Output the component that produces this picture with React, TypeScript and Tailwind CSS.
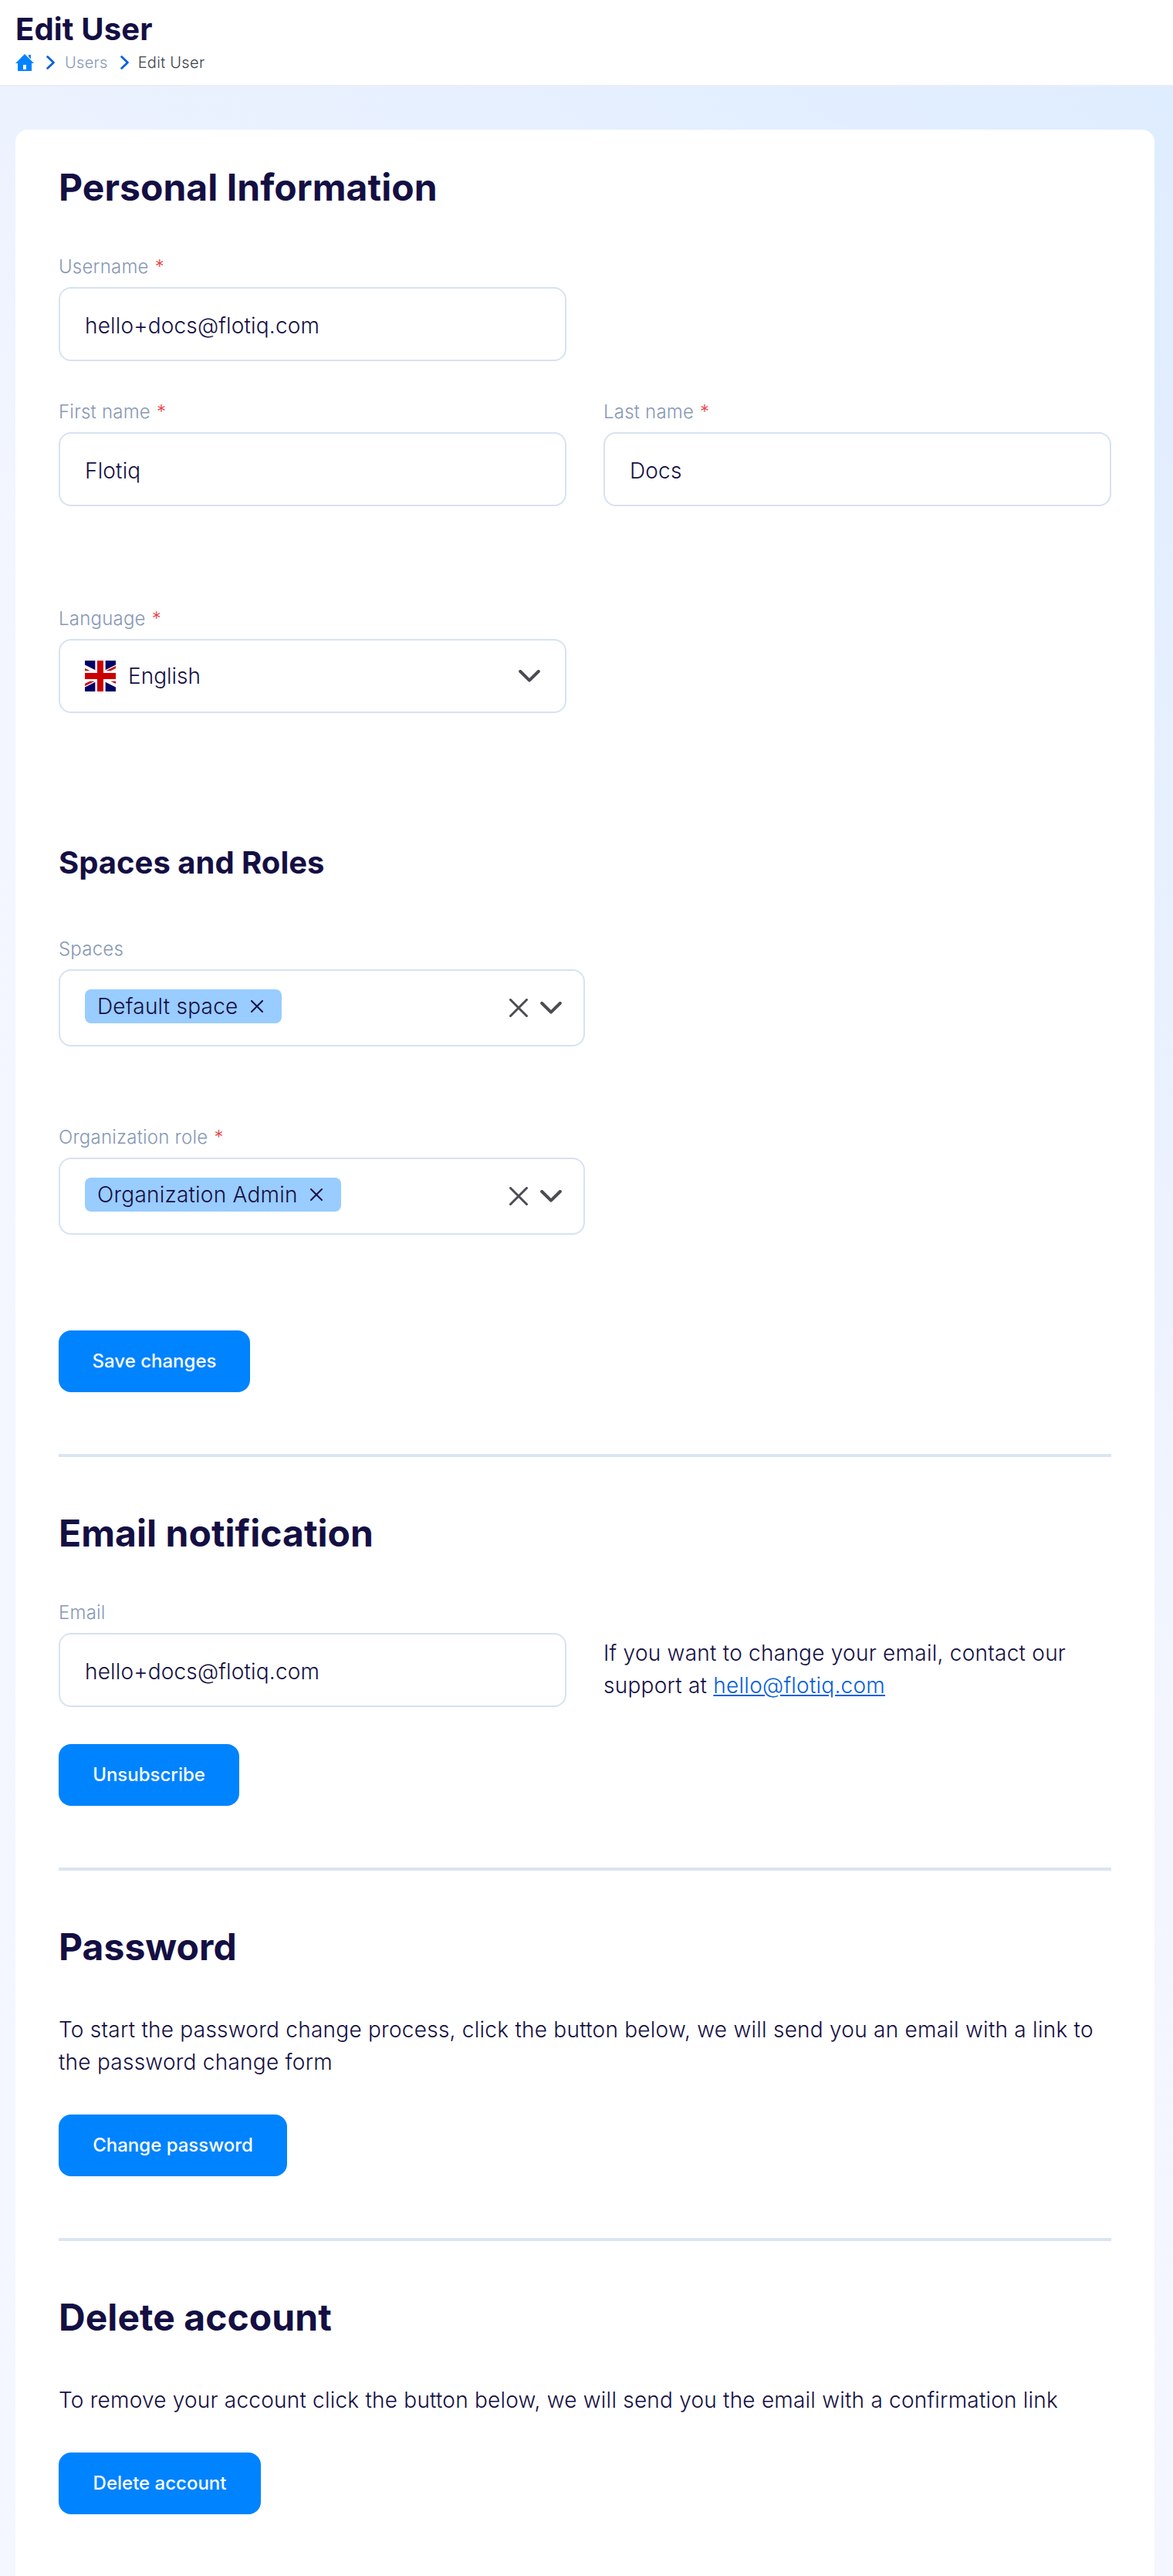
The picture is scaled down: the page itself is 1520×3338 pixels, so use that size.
import React from "react";

const Label = ({ text, req }: { text: string; req?: boolean }) => (
  <div className="mb-2 flex h-9 items-center gap-2 text-[24px] leading-9 tracking-[0.21px] text-[#8798b5]">
    <span>{text}</span>
    {req && <span className="text-[#ee3f48]">*</span>}
  </div>
);

const Field = ({ label, req, value, className = "" }: { label: string; req?: boolean; value: string; className?: string }) => (
  <div className={`w-[658px] ${className}`}>
    <Label text={label} req={req} />
    <div className="flex h-24 items-center rounded-2xl border-2 border-[#d7e2f2] px-8 pt-1 text-[28px] leading-none tracking-[0.17px]">
      {value}
    </div>
  </div>
);

const Chevron = () => (
  <svg width="28" height="16" viewBox="0 0 28 16" fill="none" stroke="#4b4b53" strokeWidth="4" strokeLinecap="round" strokeLinejoin="round">
    <path d="M2.2 2 14 13.6 25.800 2" />
  </svg>
);

const Cross = ({ size, color, sw }: { size: number; color: string; sw: number }) => (
  <svg width={size} height={size} viewBox={`0 0 ${size} ${size}`} fill="none" stroke={color} strokeWidth={sw} strokeLinecap="round">
    <path d={`M${sw / 2} ${sw / 2} ${size - sw / 2} ${size - sw / 2}M${size - sw / 2} ${sw / 2} ${sw / 2} ${size - sw / 2}`} />
  </svg>
);

const TagSelect = ({ label, req, tag, className = "" }: { label: string; req?: boolean; tag: string; className?: string }) => (
  <div className={`w-[682px] ${className}`}>
    <Label text={label} req={req} />
    <div className="flex h-[100px] items-center justify-between rounded-2xl border-2 border-[#d7e2f2] pr-7 pl-8">
      <span className="-mt-1 flex h-11 items-center gap-4 rounded-lg bg-[#99ccff] pr-6 pl-4 text-[28px] leading-none tracking-[0.23px]">
        {tag}
        <Cross size={16} color="#140f43" sw={2} />
      </span>
      <span className="flex items-center gap-4">
        <Cross size={24} color="#4b4b53" sw={3} />
        <Chevron />
      </span>
    </div>
  </div>
);

const Button = ({ children, className = "" }: { children: React.ReactNode; className?: string }) => (
  <button className={`flex h-20 items-center justify-center rounded-2xl bg-[#0083fe] text-[24px] font-medium text-white ${className}`}>
    {children}
  </button>
);

const Heading = ({ children, className = "" }: { children: React.ReactNode; className?: string }) => (
  <h2 className={className}>
    <span className="block h-[60px] pt-px text-[48px] leading-[60px] font-bold tracking-[0.05px]">{children}</span>
  </h2>
);

const Crumb = () => (
  <svg width="11" height="18" viewBox="0 0 11 18" fill="none" stroke="#0560dc" strokeWidth="2.8" strokeLinecap="round" strokeLinejoin="round">
    <path d="M1.6 1.6 9.400 9 1.6 16.400" />
  </svg>
);

const Flag = () => (
  <svg width="40" height="40" viewBox="0 0 512 512">
    <path fill="#006" d="M-256 0H768v512H-256z" />
    <path fill="#fff" d="M-256 0v57.244l909.535 454.768H768V454.770L-141.535 0H-256zM768 0v57.243L-141.535 512.010H-256v-57.243L653.535 0H768z" />
    <path fill="#fff" d="M170.664 0v512h170.664V0H170.664zM-256 170.667v170.666H768V170.667H-256z" />
    <path fill="#c00" d="M-256 204.800v102.400H768V204.800H-256zM204.800 0v512h102.400V0H204.800z" />
    <path fill="#c00" d="M-256 512 85.340 341.332h76.324L-179.676 512H-256zM-256 0 85.340 170.668H9.016L-256 38.164V0zm606.356 170.668L691.696 0H768L426.680 170.668h-76.324zM768 512 426.680 341.332h76.324L768 473.848V512z" />
  </svg>
);

export default function App() {
  return (
    <div className="flex h-[3338px] flex-col overflow-hidden bg-white font-['Inter',sans-serif] font-light text-[#140f43]">
      <header className="h-28 shrink-0 border-b-2 border-[#ecedf7] px-5 pt-4">
        <h1 className="text-[40px] leading-[44px] font-bold tracking-[0.15px]">Edit User</h1>
        <nav className="mt-2 flex h-[26px] items-center text-[20px] leading-none tracking-[0.3px]">
          <svg width="24" height="22" viewBox="0 0 24 22">
            <path fill="#0083fe" d="M12 0 24 12H21V22H3V12H0zM17 1h3v5.400l-3-3z" />
            <path fill="#fff" d="M10 14h4v6h-4z" />
          </svg>
          <span className="ml-4 flex"><Crumb /></span>
          <span className="ml-[13px] text-[#8798b5]">Users</span>
          <span className="ml-4 flex"><Crumb /></span>
          <span className="ml-3 text-[#3f3f47]">Edit User</span>
        </nav>
      </header>
      <main className="min-h-0 flex-1 overflow-hidden bg-[linear-gradient(225deg,#deedff_0%,#e2eeff_10%,#ecf2fe_32%,#f3f6ff_45%,#f4f7ff_100%)] pt-14 pr-6 pl-5">
        <div className="h-[3200px] rounded-2xl bg-white px-14 pt-11">
          <Heading>Personal Information</Heading>
          <Field className="mt-14" label="Username" req value="hello+docs@flotiq.com" />
          <div className="mt-12 flex gap-12">
            <Field label="First name" req value="Flotiq" />
            <Field label="Last name" req value="Docs" />
          </div>
          <div className="mt-32 w-[658px]">
            <Label text="Language" req />
            <div className="flex h-24 items-center rounded-2xl border-2 border-[#d7e2f2] px-8 text-[28px] leading-none">
              <Flag />
              <span className="ml-4 flex-1">English</span>
              <Chevron />
            </div>
          </div>
          <h3 className="mt-[169px] mb-[69px] text-[40px] leading-[50px] font-bold">Spaces and Roles</h3>
          <TagSelect label="Spaces" tag="Default space" />
          <TagSelect className="mt-[100px]" label="Organization role" req tag="Organization Admin" />
          <Button className="mt-[124px] w-[248px]">Save changes</Button>
          <hr className="mt-20 border-t-4 border-[#dbe4f3]" />
          <Heading className="mt-[68px]">Email notification</Heading>
          <div className="mt-14 flex gap-12">
            <Field label="Email" value="hello+docs@flotiq.com" />
            <p className="mt-[49px] w-[658px] text-[28px] leading-[42px] tracking-[0.25px]">
              If you want to change your email, contact our<br />
              support at <span className="text-[#0560dc] underline">hello@flotiq.com</span>
            </p>
          </div>
          <Button className="mt-12 w-[234px]">Unsubscribe</Button>
          <hr className="mt-20 border-t-4 border-[#dbe4f3]" />
          <Heading className="mt-[68px]">Password</Heading>
          <p className="mt-[57px] text-[28px] leading-[42px] tracking-[0.25px]">
            To start the password change process, click the button below, we will send you an email with a link to
            <br />
            the password change form
          </p>
          <Button className="mt-[47px] w-[296px]">Change password</Button>
          <hr className="mt-20 border-t-4 border-[#dbe4f3]" />
          <Heading className="mt-[68px]">Delete account</Heading>
          <p className="mt-[57px] text-[28px] leading-[42px] tracking-[0.22px]">
            To remove your account click the button below, we will send you the email with a confirmation link
          </p>
          <Button className="mt-[47px] w-[262px]">Delete account</Button>
        </div>
      </main>
    </div>
  );
}
